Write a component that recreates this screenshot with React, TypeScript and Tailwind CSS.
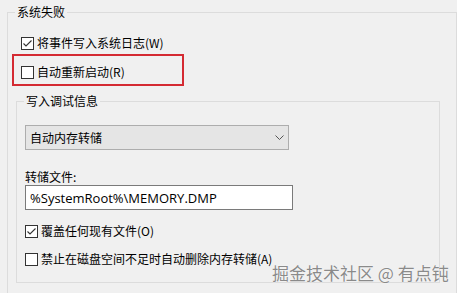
function CheckBox({ checked }: { checked?: boolean }) {
  return (
    <span className="w-[13px] h-[13px] border border-[#333333] bg-white flex items-center justify-center shrink-0">
      {checked && (
        <svg width="11" height="11" viewBox="0 0 11 11">
          <path d="M1.5 5.5 L4 8 L9.5 2.5" fill="none" stroke="#333333" strokeWidth="1.1" />
        </svg>
      )}
    </span>
  );
}

function CheckRow({ label, checked, className = '' }: { label: string; checked?: boolean; className?: string }) {
  return (
    <div className={`flex items-center h-4 gap-[3px] ${className}`}>
      <CheckBox checked={checked} />
      <span className="leading-4 whitespace-nowrap">{label}</span>
    </div>
  );
}

export default function App() {
  return (
    <div className="relative w-[457px] h-[293px] overflow-hidden bg-[#f0f0f0] text-[12px] text-black font-['Noto_Sans_CJK_SC',sans-serif]">
      {/* 系统失败 */}
      <fieldset className="mt-1 ml-[7px] w-[450px] h-[320px] border border-[#dcdcdc]">
        <legend className="ml-[7px] px-[2px] leading-4">系统失败</legend>

        <CheckRow label="将事件写入系统日志(W)" checked className="mt-[15px] ml-[13px]" />

        <div className="mt-[3px] ml-1 w-[172px] h-8 border-2 border-[#d42a32] pl-[7px] pt-2">
          <CheckRow label="自动重新启动(R)" />
        </div>

        {/* 写入调试信息 */}
        <fieldset className="mt-[7px] ml-2 w-[424px] h-[190px] border border-[#dcdcdc]">
          <legend className="ml-[7px] px-[2px] leading-4">写入调试信息</legend>

          <div className="mt-4 ml-2 w-[264px] h-[25px] bg-[#e5e5e5] border border-[#adadad] flex items-center justify-between pl-[4px] pr-[4px]">
            <span className="leading-4">自动内存转储</span>
            <svg width="9" height="5" viewBox="0 0 9 5">
              <path d="M0.5 0.5 L4.5 4.5 L8.5 0.5" fill="none" stroke="#555555" strokeWidth="1" />
            </svg>
          </div>

          <div className="mt-[19px] ml-2 h-4 leading-4">转储文件:</div>
          <div className="ml-2 w-[268px] h-[25px] bg-white border border-[#7a7a7a] flex items-center pl-1">
            <span className="text-[13px] leading-4 font-['Open_Sans',sans-serif]">%SystemRoot%\MEMORY.DMP</span>
          </div>

          <CheckRow label="覆盖任何现有文件(O)" checked className="mt-[13px] ml-2" />
          <CheckRow label="禁止在磁盘空间不足时自动删除内存转储(A)" className="mt-3 ml-2" />
        </fieldset>
      </fieldset>

      <div className="absolute left-[272px] top-[262px] text-[17px] leading-[22px] text-[#8a8a8a] whitespace-nowrap [text-shadow:0_0_1px_#ffffff,0_0_1px_#ffffff]">
        掘金技术社区 @ 有点钝
      </div>
    </div>
  );
}
